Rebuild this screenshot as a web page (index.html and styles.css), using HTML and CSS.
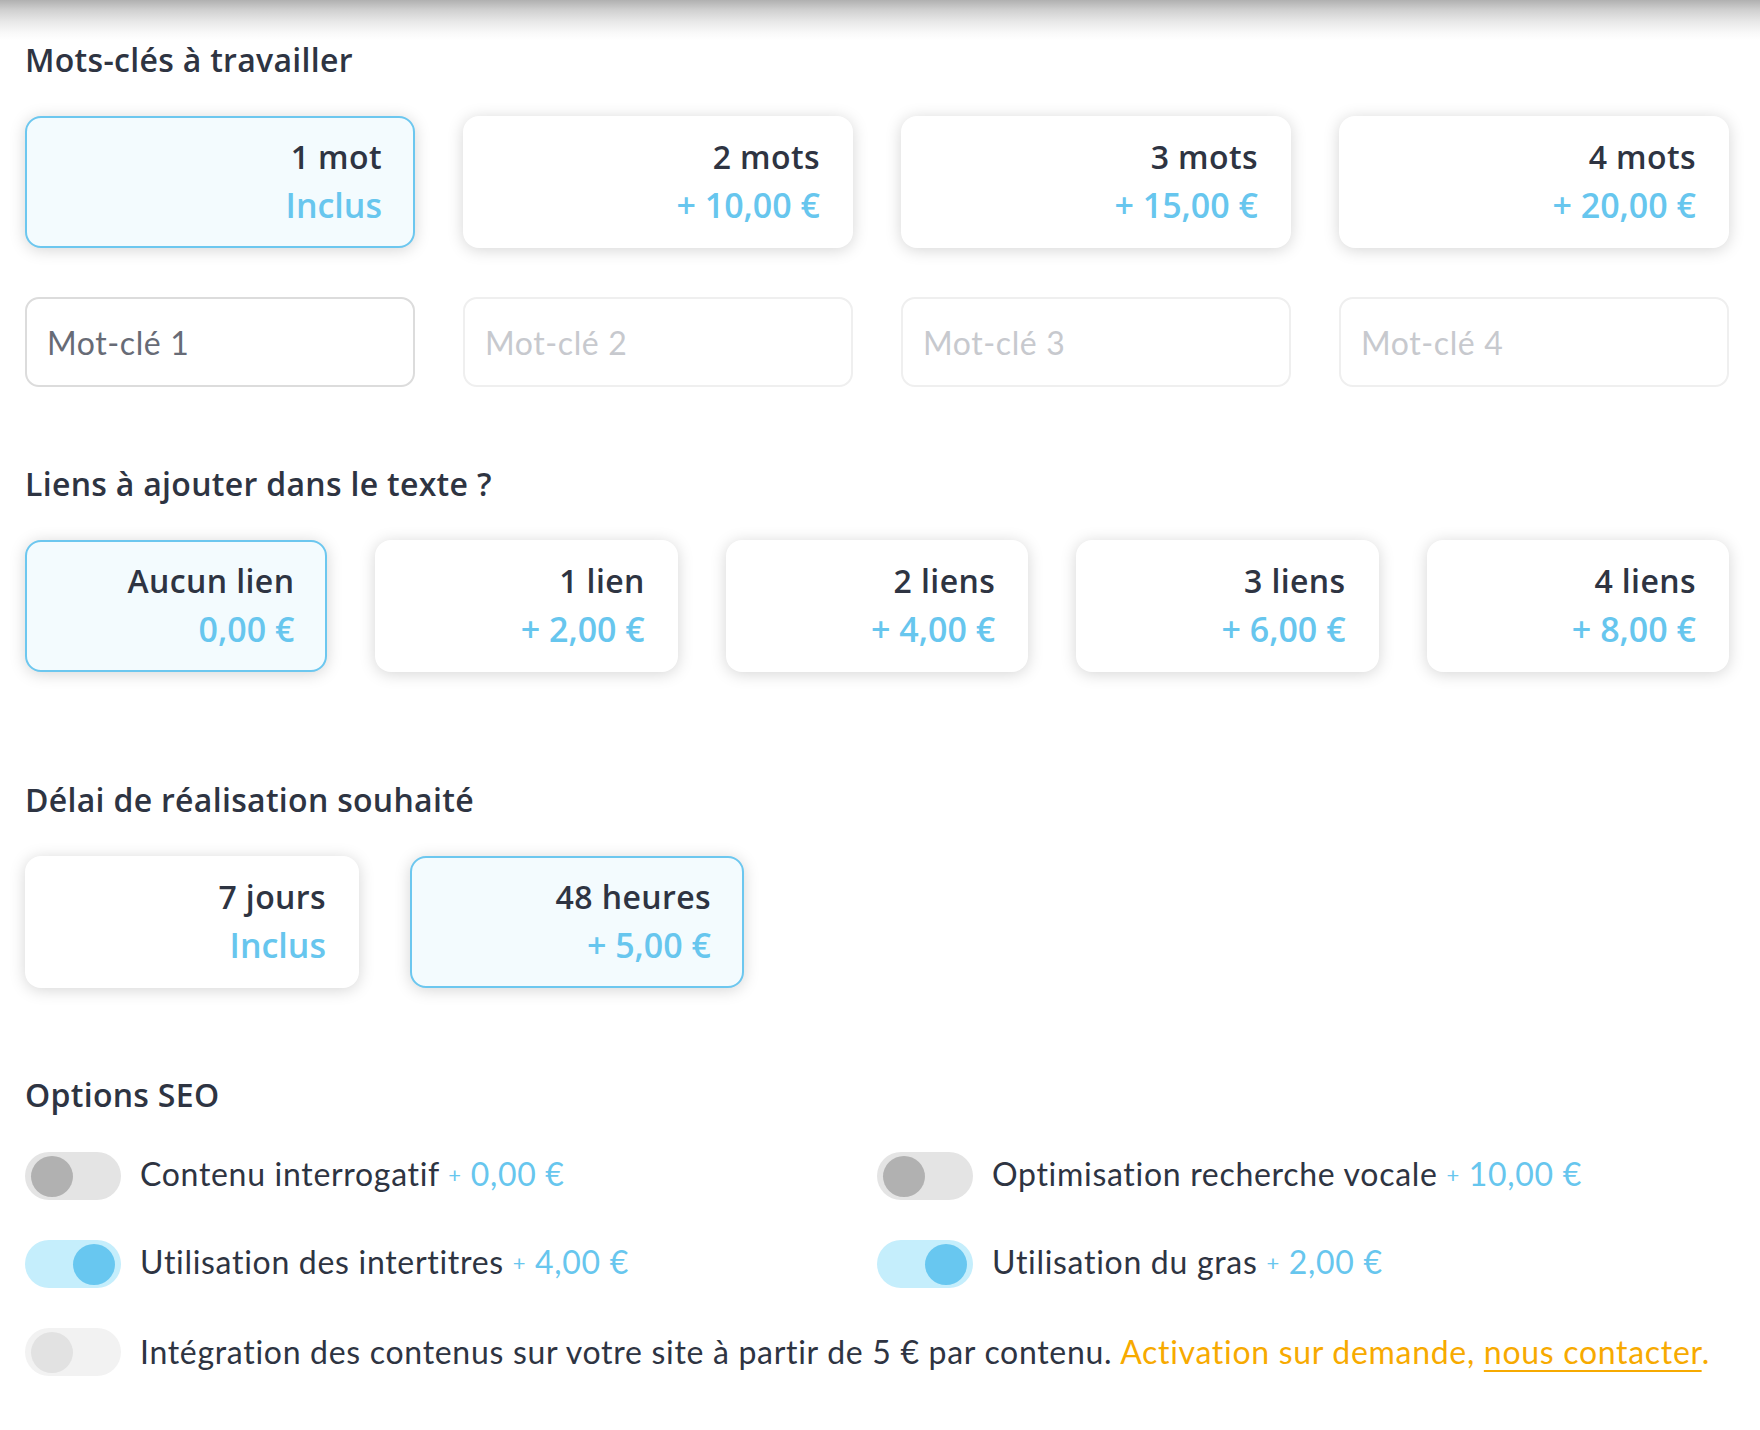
FILE: index.html
```html
<!DOCTYPE html>
<html lang="fr">
<head>
<meta charset="utf-8">
<title>Options</title>
<link rel="stylesheet" href="styles.css">
</head>
<body>
<div class="topshade"></div>
<main class="page">
  <h2 class="title">Mots-clés à travailler</h2>
  <div class="choices cols4">
    <div class="card selected"><span class="card-name">1 mot</span><span class="card-price">Inclus</span></div>
    <div class="card"><span class="card-name">2 mots</span><span class="card-price">+ 10,00 €</span></div>
    <div class="card"><span class="card-name">3 mots</span><span class="card-price">+ 15,00 €</span></div>
    <div class="card"><span class="card-name">4 mots</span><span class="card-price">+ 20,00 €</span></div>
  </div>
  <div class="choices cols4 inputs">
    <input class="field" type="text" placeholder="Mot-clé 1">
    <input class="field" type="text" placeholder="Mot-clé 2" disabled>
    <input class="field" type="text" placeholder="Mot-clé 3" disabled>
    <input class="field" type="text" placeholder="Mot-clé 4" disabled>
  </div>

  <h2 class="title t2">Liens à ajouter dans le texte ?</h2>
  <div class="choices cols5">
    <div class="card selected"><span class="card-name">Aucun lien</span><span class="card-price">0,00 €</span></div>
    <div class="card"><span class="card-name">1 lien</span><span class="card-price">+ 2,00 €</span></div>
    <div class="card"><span class="card-name">2 liens</span><span class="card-price">+ 4,00 €</span></div>
    <div class="card"><span class="card-name">3 liens</span><span class="card-price">+ 6,00 €</span></div>
    <div class="card"><span class="card-name">4 liens</span><span class="card-price">+ 8,00 €</span></div>
  </div>

  <h2 class="title t3">Délai de réalisation souhaité</h2>
  <div class="choices delay">
    <div class="card"><span class="card-name">7 jours</span><span class="card-price">Inclus</span></div>
    <div class="card selected"><span class="card-name">48 heures</span><span class="card-price">+ 5,00 €</span></div>
  </div>

  <h2 class="title t4">Options SEO</h2>
  <div class="options">
    <div class="opt"><span class="toggle"></span><span class="opt-label">Contenu interrogatif <span class="opt-price"><span class="plus">+</span> 0,00 €</span></span></div>
    <div class="opt"><span class="toggle"></span><span class="opt-label">Optimisation recherche vocale <span class="opt-price"><span class="plus">+</span> 10,00 €</span></span></div>
    <div class="opt"><span class="toggle on"></span><span class="opt-label">Utilisation des intertitres <span class="opt-price"><span class="plus">+</span> 4,00 €</span></span></div>
    <div class="opt"><span class="toggle on"></span><span class="opt-label">Utilisation du gras <span class="opt-price"><span class="plus">+</span> 2,00 €</span></span></div>
    <div class="opt wide"><span class="toggle disabled"></span><span class="opt-label">Intégration des contenus sur votre site à partir de 5 € par contenu. <span class="warn">Activation sur demande, <a class="warn-link" href="#">nous contacter</a>.</span></span></div>
  </div>
</main>
</body>
</html>
```
FILE: styles.css
```css
* { box-sizing: border-box; }
html, body { margin: 0; padding: 0; background: #fff; }
body { width: 1760px; height: 1430px; overflow: hidden; }

.topshade {
  height: 40px;
  background: linear-gradient(to bottom, #b0b0b0 0%, #d0d0d0 25%, #e9e9e9 55%, #f8f8f8 80%, #ffffff 100%);
}

.page {
  width: 1704px;
  margin-left: 25px;
}

.title {
  margin: 0;
  font-family: "Open Sans", sans-serif;
  font-weight: 600;
  font-size: 32px;
  letter-spacing: 0.3px;
  line-height: 40px;
  color: #2e3442;
}
.t2 { margin-top: 77px; }
.t3 { margin-top: 108px; }
.t4 { margin-top: 87px; }

.choices {
  display: grid;
  gap: 48px;
  margin-top: 36px;
}
.cols4 { grid-template-columns: repeat(4, 1fr); }
.cols5 { grid-template-columns: repeat(5, 1fr); }
.delay { grid-template-columns: 334px 334px; gap: 51px; }

.card {
  height: 132px;
  border: 2px solid transparent;
  border-radius: 16px;
  background: #fff;
  box-shadow: 0 2px 16px rgba(0, 0, 0, 0.17);
  padding: 15px 31px 0 20px;
  display: flex;
  flex-direction: column;
  align-items: flex-end;
  font-family: "Open Sans", sans-serif;
  font-weight: 600;
}
.card.selected {
  background: #f3fbfe;
  border-color: #6cc7ef;
}
.card-name {
  font-size: 32px;
  letter-spacing: 0.4px;
  line-height: 48px;
  color: #2e3442;
}
.card-price {
  font-size: 34px;
  line-height: 48px;
  color: #67c6ee;
}

.inputs { margin-top: 49px; }
.field {
  height: 90px;
  width: 100%;
  border: 2px solid #dcdcdc;
  border-radius: 14px;
  background: #fff;
  padding: 0 20px;
  font-family: Lato, sans-serif;
  font-size: 32px;
  letter-spacing: 0.6px;
  color: #444;
  outline: none;
}
.field::placeholder { color: #676b76; }
.field:disabled { border-color: #efefef; background: #fff; }
.field:disabled::placeholder { color: #c7c9ce; }

.options {
  display: grid;
  grid-template-columns: 1fr 1fr;
  row-gap: 40px;
  margin-top: 37px;
}
.opt {
  display: flex;
  align-items: center;
  gap: 19px;
  height: 48px;
}
.opt.wide { grid-column: 1 / span 2; }

.toggle {
  flex: 0 0 96px;
  height: 48px;
  border-radius: 24px;
  background: #e4e4e4;
  display: flex;
  align-items: center;
  padding: 0 6px;
}
.toggle::before {
  content: "";
  width: 42px;
  height: 41px;
  border-radius: 50%;
  background: #b1b1b1;
}
.toggle.on { background: #c5eefc; justify-content: flex-end; }
.toggle.on::before { background: #68c7f0; }
.toggle.disabled { background: #f2f2f2; }
.toggle.disabled::before { background: #e2e2e2; }

.opt-label {
  font-family: Lato, sans-serif;
  font-size: 32px;
  letter-spacing: 0.7px;
  line-height: 48px;
  color: #2e3442;
  white-space: nowrap;
}
.opt-price { color: #67c6ee; }
.plus { font-size: 22px; position: relative; top: -3px; }
.warn { color: #f7aa00; }
.warn-link { color: #f7aa00; text-decoration: underline; text-underline-offset: 6px; text-decoration-thickness: 2px; }
```
